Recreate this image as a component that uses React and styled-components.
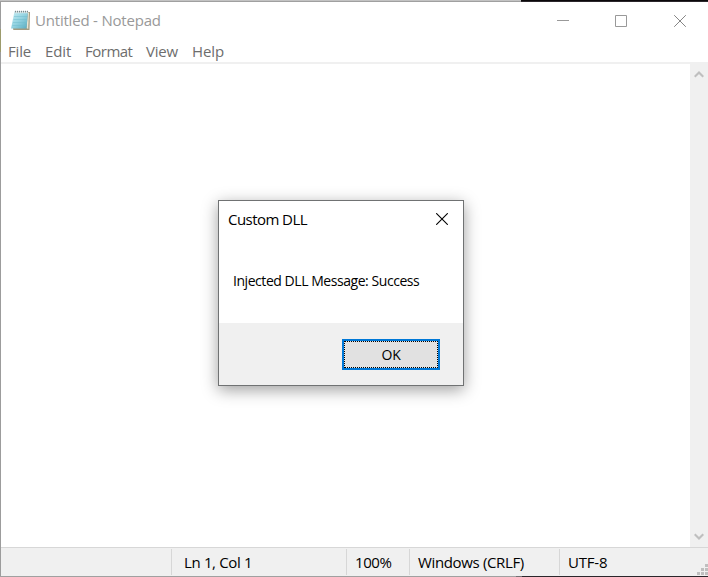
import React from "react";
import styled, { createGlobalStyle } from "styled-components";

const GlobalStyle = createGlobalStyle`
  * { box-sizing: border-box; }
  html, body { margin: 0; padding: 0; }
  body { overflow: hidden; font-family: "Open Sans", "Noto Sans", sans-serif; }
`;

const Window = styled.div`
  position: relative;
  display: grid;
  grid-template-columns: 1px 707px;
  width: 708px;
  height: 577px;
  background: #fff;
`;

const LeftEdge = styled.div`
  background: linear-gradient(#9c9c9c 29px, #9c9b6c 29px 52px, #9c9c9c 52px);
`;

const Frame = styled.div`
  display: grid;
  grid-template-rows: 2px 37px 23px 2px 483px 29px 1px;
`;

const TopEdge = styled.div`
  margin-left: -1px;
  background:
    linear-gradient(90deg, #a0a0a0 521px, #2b262b 521px) 0 1px / 100% 1px no-repeat,
    linear-gradient(90deg, #c3c3c3 521px, #0a080a 521px) 0 0 / 100% 1px no-repeat;
`;

const BottomEdge = styled.div`
  margin-left: -1px;
  background: linear-gradient(90deg, #a0a0a0 516px, #737073 516px 522px, #2b262b 522px);
`;

const Label = styled.span`
  display: block;
  font-size: ${(p) => p.$size || 15}px;
  line-height: 20px;
  letter-spacing: ${(p) => p.$track || 0}px;
  color: ${(p) => p.$color || "#000"};
  white-space: pre;
`;

const TitleBar = styled.header`
  display: flex;
  align-items: center;
  padding-left: 9px;
`;

const AppTitle = styled.div`
  flex: 1;
  padding: 0 0 2px 4px;
`;

const CaptionButton = styled.button`
  display: grid;
  place-items: center;
  width: ${(p) => p.$w}px;
  height: 36px;
  padding: ${(p) => p.$pad || "0"};
  border: 0;
  background: transparent;
`;

const MenuBar = styled.nav`
  display: grid;
  grid-template-columns: 37px 40px 61px 46px 50px;
  align-items: center;
  padding-left: 7px;
`;

const Rule = styled.div`
  background: #f0f0f0;
`;

const Editor = styled.main`
  display: grid;
  grid-template-columns: 1fr 18px;
`;

const ScrollBar = styled.div`
  display: flex;
  flex-direction: column;
  justify-content: space-between;
  align-items: center;
  padding: 6px 0;
  background: #f0f0f0;
`;

const StatusBar = styled.footer`
  display: grid;
  grid-template-columns: 170px 175px 63px 150px 1fr;
  padding: 1px 0;
  border-top: 1px solid #d7d7d7;
  background: #f0f0f0;
`;

const StatusCell = styled.div`
  display: flex;
  align-items: center;
  justify-content: space-between;
  padding-left: ${(p) => p.$pad || 0}px;
  border-left: ${(p) => (p.$pad ? "1px solid #d7d7d7" : "0")};
`;

const Grip = styled.svg`
  align-self: flex-end;
  display: block;
`;

const Dialog = styled.section`
  position: absolute;
  left: 218px;
  top: 200px;
  width: 246px;
  height: 186px;
  display: grid;
  grid-template-rows: 36px 86px 62px;
  background: #fff;
  border: 1px solid #707273;
  box-shadow: 0 4px 15px rgba(0, 0, 0, 0.38);
`;

const DialogHeader = styled.div`
  display: flex;
  align-items: center;
  justify-content: space-between;
  padding: 0 15px 1px 9px;
`;

const DialogBody = styled.div`
  padding: 34px 0 0 14px;
`;

const DialogFooter = styled.div`
  display: flex;
  justify-content: flex-end;
  padding: 16px 23px 0 0;
  background: #f0f0f0;
`;

const OkButton = styled.button`
  width: 98px;
  height: 31px;
  padding: 0;
  border: 2px solid #0078d7;
  background: #e1e1e1;
  font-family: inherit;
`;

const FocusRing = styled.span`
  display: grid;
  place-items: center;
  width: 94px;
  height: 27px;
  border: 1px dotted #000;
`;

function NotepadIcon() {
  return (
    <svg width="21" height="22" viewBox="0 0 21 22">
      <defs>
        <linearGradient id="page" x1="0" y1="0" x2="1" y2="1">
          <stop offset="0" stopColor="#c9eef4" />
          <stop offset="0.5" stopColor="#94d3e1" />
          <stop offset="1" stopColor="#58aabf" />
        </linearGradient>
      </defs>
      <path d="M5 2H20L19.5 20H3.5L3 19Z" fill="#a39b80" />
      <path d="M18 2.5L19 2.5 18.2 19 16.5 18Z" fill="#e9e6d5" />
      <path d="M4.5 1.5H18L16.5 18.5H1Z" fill="url(#page)" />
      <path d="M4 6.5H17.2M3.6 9.5H17M3 12.5H16.7M2.4 15.5H16.4" stroke="#70bdcd" strokeWidth="0.5" />
      <path d="M4.5 2.2H18" stroke="#d9e8ea" strokeWidth="2" />
      <path d="M5.5 0.8V2.4M7.5 0.8V2.4M9.5 0.8V2.4M11.5 0.8V2.4M13.5 0.8V2.4M15.5 0.8V2.4M17.5 0.8V2.4" stroke="#7d888b" strokeWidth="1" />
    </svg>
  );
}

function CrossIcon({ color, width = 1 }) {
  return (
    <svg width="12" height="12" viewBox="0 0 12 12">
      <path d="M0.2 0.2L11.8 11.8M11.8 0.2L0.2 11.8" stroke={color} strokeWidth={width} />
    </svg>
  );
}

function Chevron({ d }) {
  return (
    <svg width="10" height="9" viewBox="0 0 10 9">
      <path d={d} fill="none" stroke="#bfbfbf" strokeWidth="2.2" />
    </svg>
  );
}

const MENU = [
  ["File", -0.2],
  ["Edit", -0.1],
  ["Format", -0.5],
  ["View", -0.2],
  ["Help", -0.1],
];

const STATUS = [
  ["Ln 1, Col 1", 12, -0.35],
  ["100%", 8, -0.4],
  ["Windows (CRLF)", 8, -0.35],
  ["UTF-8", 8, -0.2],
];

export default function App() {
  return (
    <>
      <GlobalStyle />
      <Window>
        <LeftEdge />
        <Frame>
          <TopEdge />
          <TitleBar>
            <NotepadIcon />
            <AppTitle>
              <Label $color="#999" $track={-0.2}>Untitled - Notepad</Label>
            </AppTitle>
            <CaptionButton $w={58} aria-label="Minimize">
              <svg width="12" height="12">
                <path d="M0 5.5H12" stroke="#999" />
              </svg>
            </CaptionButton>
            <CaptionButton $w={58} aria-label="Maximize">
              <svg width="12" height="12">
                <path d="M0.5 0.5H11.5V11.5H0.5Z" fill="none" stroke="#999" />
              </svg>
            </CaptionButton>
            <CaptionButton $w={58} $pad="0 0 0 2px" aria-label="Close">
              <CrossIcon color="#858585" />
            </CaptionButton>
          </TitleBar>
          <MenuBar>
            {MENU.map(([name, track]) => (
              <Label key={name} $color="#6d6d6d" $track={track}>{name}</Label>
            ))}
          </MenuBar>
          <Rule />
          <Editor>
            <div />
            <ScrollBar>
              <Chevron d="M0.7 6.8L5 2.5 9.3 6.8" />
              <Chevron d="M0.7 2.2L5 6.5 9.3 2.2" />
            </ScrollBar>
          </Editor>
          <StatusBar>
            <StatusCell />
            {STATUS.map(([text, pad, track], i) => (
              <StatusCell key={text} $pad={pad}>
                <Label $track={track}>{text}</Label>
                {i === STATUS.length - 1 && (
                  <Grip width="11" height="11">
                    <path d="M8 0h3v3h-3zM4 4h3v3h-3zM8 4h3v3h-3zM0 8h3v3h-3zM4 8h3v3h-3zM8 8h3v3h-3z" fill="#bfbfbf" />
                  </Grip>
                )}
              </StatusCell>
            ))}
          </StatusBar>
          <BottomEdge />
        </Frame>
        <Dialog role="dialog">
          <DialogHeader>
            <Label $track={-0.55}>Custom DLL</Label>
            <CrossIcon color="#000" width={1.1} />
          </DialogHeader>
          <DialogBody>
            <Label $size={14} $track={-0.45}>Injected DLL Message: Success</Label>
          </DialogBody>
          <DialogFooter>
            <OkButton>
              <FocusRing>
                <Label $size={14} $track={-0.2}>OK</Label>
              </FocusRing>
            </OkButton>
          </DialogFooter>
        </Dialog>
      </Window>
    </>
  );
}
